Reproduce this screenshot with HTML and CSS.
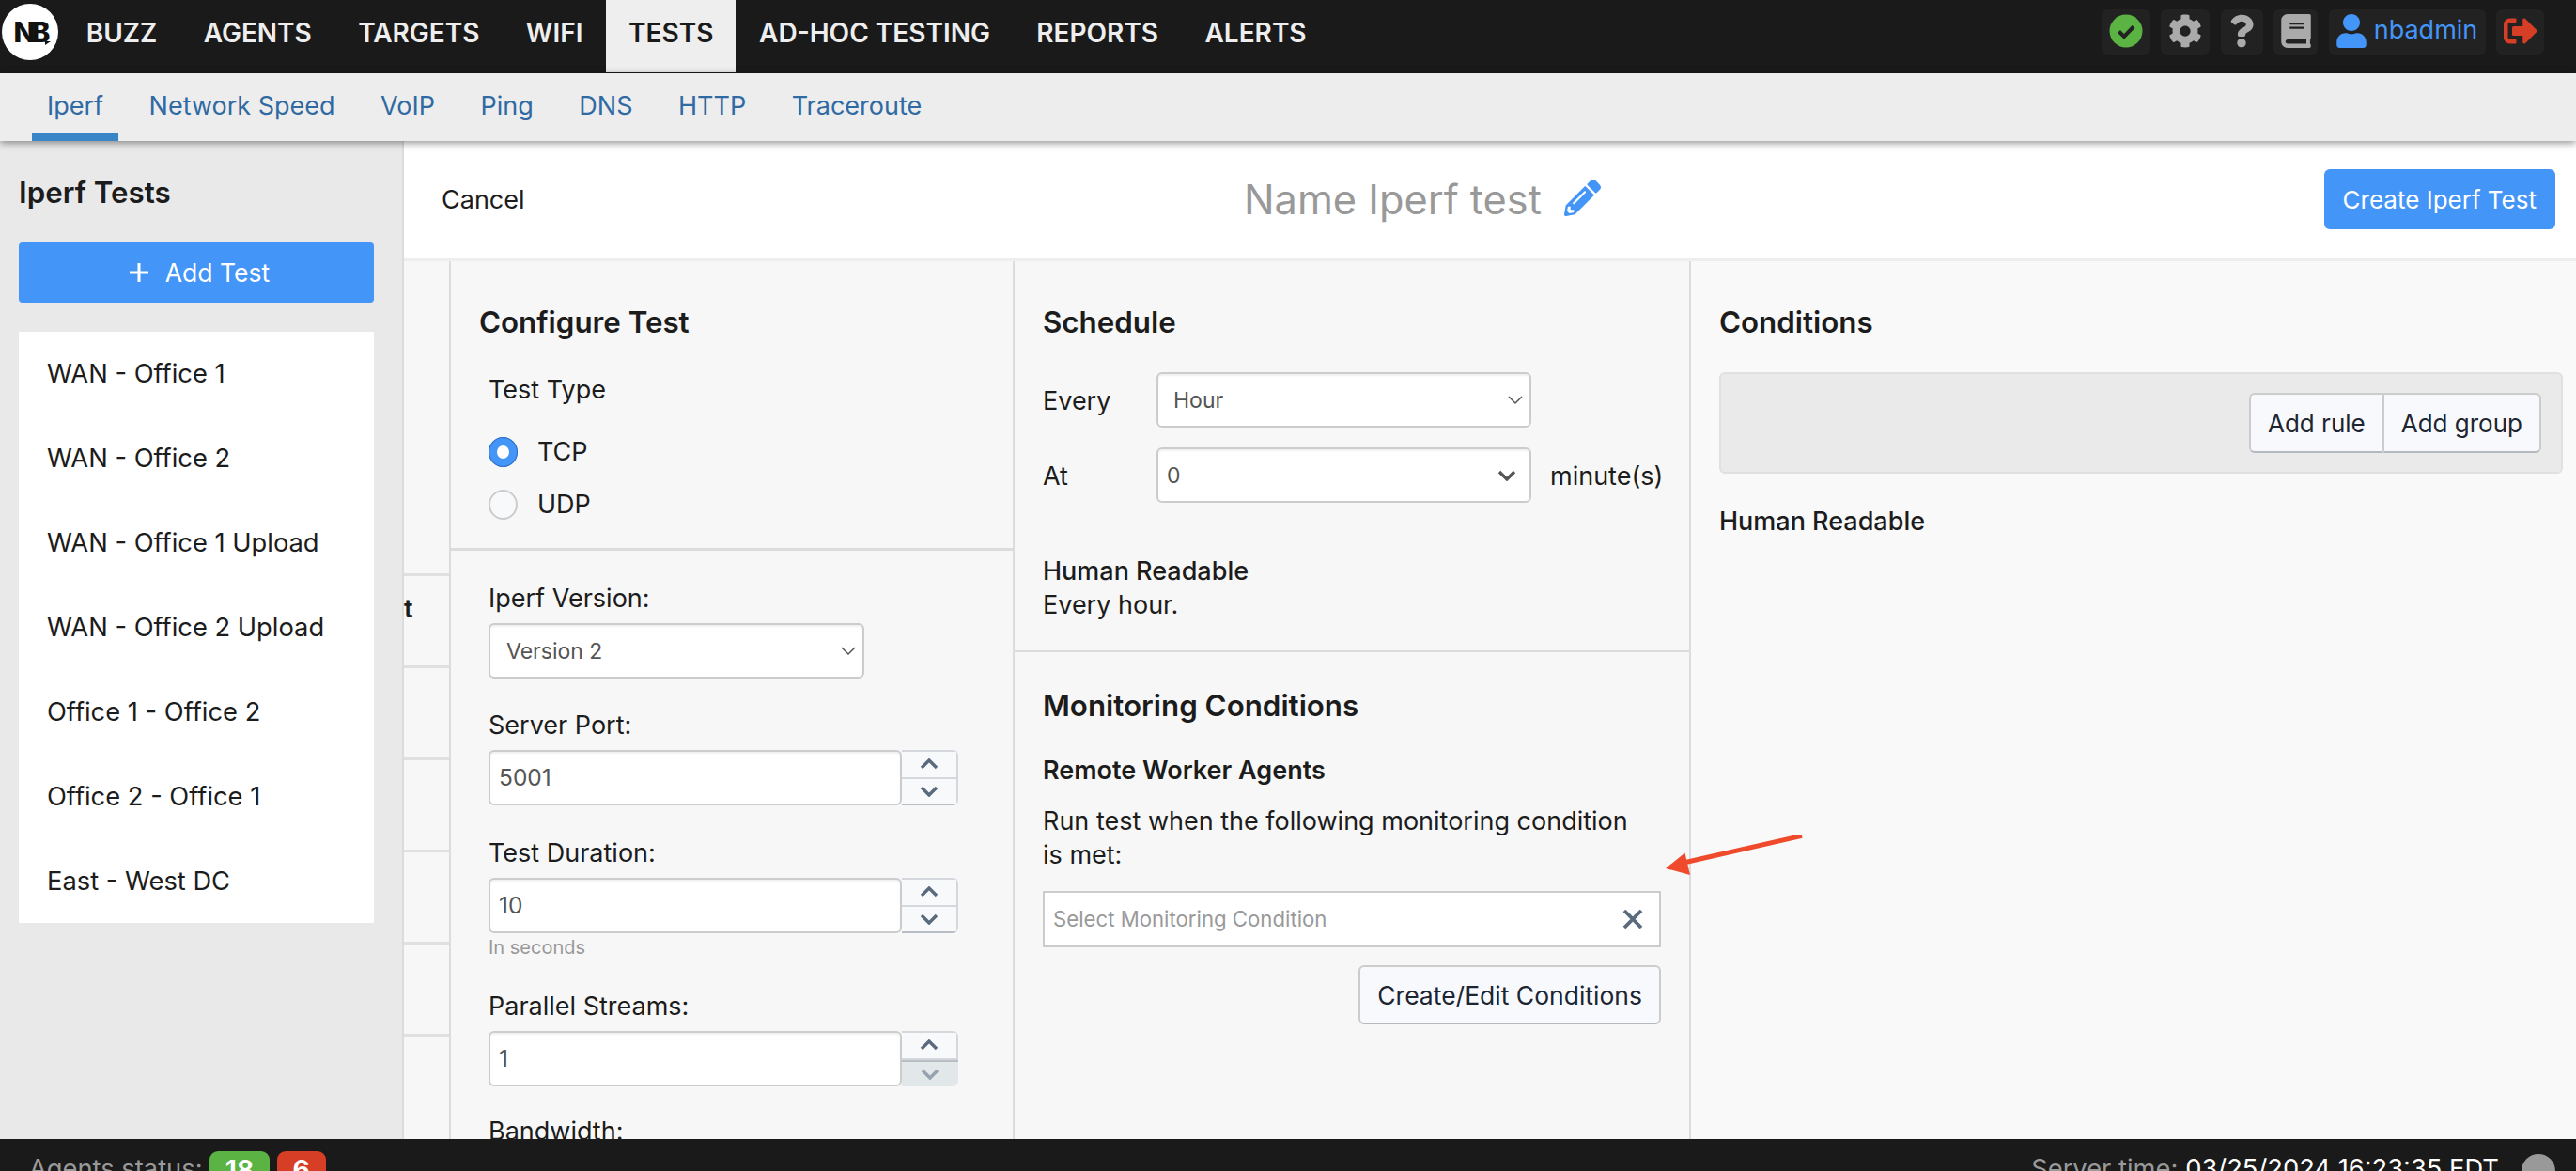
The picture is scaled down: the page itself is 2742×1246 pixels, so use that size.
FILE: index.html
```html
<!DOCTYPE html>
<html lang="en">

<head>
  <meta charset="UTF-8">
  <meta name="viewport" content="width=device-width, initial-scale=1.0">
  <title>Iperf Tests</title>
  <link rel="stylesheet" href="styles.css">
</head>

<body>
  <div class="app">
    <!-- top navigation -->
    <header class="topbar">
      <div class="logo"><span>NB</span></div>
      <nav class="mainnav">
        <a class="mainnav-item">BUZZ</a>
        <a class="mainnav-item">AGENTS</a>
        <a class="mainnav-item">TARGETS</a>
        <a class="mainnav-item">WIFI</a>
        <a class="mainnav-item active">TESTS</a>
        <a class="mainnav-item">AD-HOC TESTING</a>
        <a class="mainnav-item">REPORTS</a>
        <a class="mainnav-item">ALERTS</a>
      </nav>
      <div class="tools">
        <span class="chip chip-status">
          <svg class="icon-status" viewBox="0 0 36 36"><circle cx="18" cy="18" r="17.5" fill="#5ab343"/><path d="M10.5 18.5l5.5 5.5 10-10.5" fill="none" stroke="#222" stroke-width="4"/></svg>
        </span>
        <span class="chip chip-gear">
          <svg class="icon-gear" viewBox="0 0 512 512"><path fill="#aaa" d="M487.4 315.7l-42.6-24.6c4.3-23.2 4.3-47 0-70.2l42.6-24.6c4.9-2.8 7.1-8.6 5.5-14-11.1-35.6-30-67.8-54.7-94.6-3.8-4.1-10-5.1-14.8-2.3L380.8 110c-17.9-15.4-38.5-27.3-60.8-35.1V25.8c0-5.6-3.9-10.5-9.4-11.7-36.7-8.2-74.3-7.8-109.2 0-5.5 1.2-9.4 6.1-9.4 11.7V75c-22.2 7.9-42.8 19.8-60.8 35.1L88.7 85.5c-4.9-2.8-11-1.9-14.8 2.3-24.7 26.7-43.6 58.9-54.7 94.6-1.7 5.4.6 11.2 5.5 14L67.3 221c-4.3 23.2-4.3 47 0 70.2l-42.6 24.6c-4.9 2.8-7.1 8.6-5.5 14 11.1 35.6 30 67.8 54.7 94.6 3.8 4.1 10 5.1 14.8 2.3l42.6-24.6c17.9 15.4 38.5 27.3 60.8 35.1v49.2c0 5.6 3.9 10.5 9.4 11.7 36.7 8.2 74.3 7.8 109.2 0 5.5-1.2 9.4-6.1 9.4-11.7v-49.2c22.2-7.9 42.8-19.8 60.8-35.1l42.6 24.6c4.9 2.8 11 1.9 14.8-2.3 24.7-26.7 43.6-58.9 54.7-94.6 1.5-5.5-.7-11.3-5.6-14.1zM256 336c-44.1 0-80-35.9-80-80s35.9-80 80-80 80 35.9 80 80-35.9 80-80 80z"/></svg>
        </span>
        <span class="chip chip-help">
          <svg class="icon-help" viewBox="0 0 384 512"><path fill="#aaa" d="M202.021 0C122.202 0 70.503 32.703 29.914 91.026c-7.363 10.58-5.093 25.086 5.178 32.874l43.138 32.709c10.373 7.865 25.132 6.026 33.253-4.148 25.049-31.381 43.63-49.449 82.757-49.449 30.764 0 68.816 19.799 68.816 49.631 0 22.552-18.617 34.134-48.993 51.164-35.423 19.86-82.299 44.576-82.299 106.405V320c0 13.255 10.745 24 24 24h72.471c13.255 0 24-10.745 24-24v-5.773c0-42.86 125.268-44.645 125.268-160.627C377.504 66.256 286.902 0 202.021 0zM192 373.459c-38.196 0-69.271 31.075-69.271 69.271 0 38.195 31.075 69.27 69.271 69.27s69.271-31.075 69.271-69.271-31.075-69.27-69.271-69.27z"/></svg>
        </span>
        <span class="chip chip-book">
          <svg class="icon-book" viewBox="0 0 448 512"><path fill="#aaa" d="M448 360V24c0-13.3-10.7-24-24-24H96C43 0 0 43 0 96v320c0 53 43 96 96 96h328c13.3 0 24-10.7 24-24v-16c0-7.5-3.5-14.3-8.9-18.7-4.2-15.4-4.2-59.3 0-74.7 5.4-4.3 8.9-11.1 8.9-18.6zM128 134c0-3.3 2.7-6 6-6h212c3.3 0 6 2.7 6 6v20c0 3.3-2.7 6-6 6H134c-3.3 0-6-2.7-6-6v-20zm0 64c0-3.3 2.7-6 6-6h212c3.3 0 6 2.7 6 6v20c0 3.3-2.7 6-6 6H134c-3.3 0-6-2.7-6-6v-20zm253.4 250H96c-17.7 0-32-14.3-32-32 0-17.6 14.4-32 32-32h285.4c-1.9 17.1-1.9 46.9 0 64z"/></svg>
        </span>
        <span class="chip chip-user">
          <svg class="icon-user" viewBox="0 0 448 512"><path fill="#4495f8" d="M224 256c70.7 0 128-57.3 128-128S294.7 0 224 0 96 57.3 96 128s57.3 128 128 128zm89.6 32h-16.7c-22.2 10.2-46.9 16-72.9 16s-50.6-5.8-72.9-16h-16.7C60.2 288 0 348.2 0 422.4V464c0 26.5 21.5 48 48 48h352c26.5 0 48-21.5 48-48v-41.6c0-74.2-60.2-134.4-134.4-134.4z"/></svg>
          <span class="username">nbadmin</span>
        </span>
        <span class="chip chip-logout">
          <svg class="icon-logout" viewBox="0 0 512 512"><path fill="#d63e26" d="M497 273L329 441c-15 15-41 4.5-41-17v-96H152c-13.3 0-24-10.7-24-24v-96c0-13.3 10.7-24 24-24h136V88c0-21.4 25.9-32 41-17l168 168c9.3 9.4 9.3 24.6 0 34zM192 436v-40c0-6.6-5.4-12-12-12H96c-17.7 0-32-14.3-32-32V160c0-17.7 14.3-32 32-32h84c6.6 0 12-5.4 12-12V76c0-6.6-5.4-12-12-12H96c-53 0-96 43-96 96v192c0 53 43 96 96 96h84c6.6 0 12-5.4 12-12z"/></svg>
        </span>
      </div>
    </header>

    <nav class="subnav">
      <a class="subnav-item active">Iperf</a>
      <a class="subnav-item">Network Speed</a>
      <a class="subnav-item">VoIP</a>
      <a class="subnav-item">Ping</a>
      <a class="subnav-item">DNS</a>
      <a class="subnav-item">HTTP</a>
      <a class="subnav-item">Traceroute</a>
    </nav>

    <div class="workspace">
      <!-- list of tests -->
      <aside class="sidebar">
        <h2 class="sidebar-title">Iperf Tests</h2>
        <button class="add-test" type="button">
          <svg class="icon-plus" viewBox="0 0 22 22"><path d="M11 1v20M1 11h20" stroke="#fff" stroke-width="3"/></svg>
          Add Test
        </button>
        <ul class="test-list">
          <li>WAN - Office 1</li>
          <li>WAN - Office 2</li>
          <li>WAN - Office 1 Upload</li>
          <li>WAN - Office 2 Upload</li>
          <li>Office 1 - Office 2</li>
          <li>Office 2 - Office 1</li>
          <li>East - West DC</li>
        </ul>
      </aside>

      <main class="editor">
        <div class="editor-head">
          <a class="cancel">Cancel</a>
          <div class="test-name">
            <span>Name Iperf test</span>
            <svg class="icon-pencil" viewBox="0 0 512 512"><path fill="#4495f8" d="M497.9 142.1l-46.1 46.1c-4.7 4.7-12.3 4.7-17 0l-111-111c-4.7-4.7-4.7-12.3 0-17l46.1-46.1c18.7-18.7 49.1-18.7 67.9 0l60.1 60.1c18.8 18.7 18.8 49.1 0 67.9zM284.2 99.8L21.6 362.4.4 483.9c-2.9 16.4 11.4 30.6 27.8 27.8l121.5-21.3 262.6-262.6c4.7-4.7 4.7-12.3 0-17l-111-111c-4.8-4.7-12.4-4.7-17.1 0zM124.1 339.9c-5.5-5.5-5.5-14.3 0-19.8l154-154c5.5-5.5 14.3-5.5 19.8 0s5.5 14.3 0 19.8l-154 154c-5.5 5.5-14.3 5.5-19.8 0zM88 424h48v36.3l-64.5 11.3-31.1-31.1L51.7 376H88v48z"/></svg>
          </div>
          <button class="create-test" type="button">Create Iperf Test</button>
        </div>

        <div class="columns">
          <!-- table that is hidden behind the editor -->
          <div class="behind">
            <div class="behind-cell behind-first"></div>
            <div class="behind-cell">t</div>
            <div class="behind-cell"></div>
            <div class="behind-cell"></div>
            <div class="behind-cell"></div>
            <div class="behind-cell"></div>
          </div>

          <section class="col col-configure">
            <div class="block block-type">
              <h3 class="block-title">Configure Test</h3>
              <div class="test-type">Test Type</div>
              <label class="radio-row"><span class="radio checked"></span>TCP</label>
              <label class="radio-row"><span class="radio"></span>UDP</label>
            </div>
            <div class="block block-fields">
              <div class="field-label">Iperf Version:</div>
              <div class="select select-version">
                <span>Version 2</span>
                <svg class="chevron-thin" viewBox="0 0 16 10"><path d="M1 1l7 7 7-7" fill="none" stroke="#555" stroke-width="1.5"/></svg>
              </div>

              <div class="field-label">Server Port:</div>
              <div class="number">
                <div class="number-value">5001</div>
                <div class="stepper">
                  <span class="step"><svg class="chevron" viewBox="0 0 20 12"><path d="M2 10l8-8 8 8" fill="none" stroke="#5a6b7d" stroke-width="3.4"/></svg></span>
                  <span class="step"><svg class="chevron" viewBox="0 0 20 12"><path d="M2 2l8 8 8-8" fill="none" stroke="#5a6b7d" stroke-width="3.4"/></svg></span>
                </div>
              </div>

              <div class="field-label">Test Duration:</div>
              <div class="number">
                <div class="number-value">10</div>
                <div class="stepper">
                  <span class="step"><svg class="chevron" viewBox="0 0 20 12"><path d="M2 10l8-8 8 8" fill="none" stroke="#5a6b7d" stroke-width="3.4"/></svg></span>
                  <span class="step"><svg class="chevron" viewBox="0 0 20 12"><path d="M2 2l8 8 8-8" fill="none" stroke="#5a6b7d" stroke-width="3.4"/></svg></span>
                </div>
              </div>
              <div class="hint">In seconds</div>

              <div class="field-label">Parallel Streams:</div>
              <div class="number">
                <div class="number-value">1</div>
                <div class="stepper">
                  <span class="step"><svg class="chevron" viewBox="0 0 20 12"><path d="M2 10l8-8 8 8" fill="none" stroke="#5a6b7d" stroke-width="3.4"/></svg></span>
                  <span class="step step-disabled"><svg class="chevron" viewBox="0 0 20 12"><path d="M2 2l8 8 8-8" fill="none" stroke="#96a2ae" stroke-width="3.4"/></svg></span>
                </div>
              </div>

              <div class="field-label field-last">Bandwidth:</div>
            </div>
          </section>

          <section class="col col-schedule">
            <div class="block block-schedule">
              <h3 class="block-title">Schedule</h3>
              <div class="schedule-grid">
                <span>Every</span>
                <div class="select">
                  <span class="select-text-hour">Hour</span>
                  <svg class="chevron-thin" viewBox="0 0 16 10"><path d="M1 1l7 7 7-7" fill="none" stroke="#555" stroke-width="1.5"/></svg>
                </div>
                <span></span>
                <span>At</span>
                <div class="select select-minute">
                  <span>0</span>
                  <svg class="chevron-bold" viewBox="0 0 20 12"><path d="M2 2l8 8 8-8" fill="none" stroke="#555" stroke-width="3.4"/></svg>
                </div>
                <span>minute(s)</span>
              </div>
              <div class="readable">
                <div class="readable-title">Human Readable</div>
                <div>Every hour.</div>
              </div>
            </div>

            <div class="block block-monitoring">
              <h3 class="block-title">Monitoring Conditions</h3>
              <div class="agents-title">Remote Worker Agents</div>
              <p class="monitor-text">Run test when the following monitoring condition<br>is met:</p>
              <div class="monitor-select">
                <span>Select Monitoring Condition</span>
                <svg class="icon-clear" viewBox="0 0 22 20"><path d="M2 1l18 18M20 1L2 19" stroke="#5a6b7d" stroke-width="3.8"/></svg>
              </div>
              <div class="monitor-actions">
                <button class="plain-btn edit-btn" type="button">Create/Edit Conditions</button>
              </div>
            </div>
          </section>

          <section class="col col-conditions">
            <h3 class="block-title">Conditions</h3>
            <div class="rule-box">
              <div class="btn-group">
                <button class="plain-btn group-btn" type="button">Add rule</button>
                <button class="plain-btn group-btn" type="button">Add group</button>
              </div>
            </div>
            <div class="readable-title conditions-readable">Human Readable</div>
          </section>
        </div>
      </main>
    </div>

    <footer class="statusbar">
      <div class="status-left">
        <span class="muted">Agents status:</span>
        <span class="badge badge-green">18</span>
        <span class="badge badge-red">6</span>
      </div>
      <div class="status-right">
        <span class="muted">Server time:</span>
        <span class="server-time">03/25/2024 16:23:35 EDT</span>
        <span class="status-dot"></span>
      </div>
    </footer>

    <!-- annotation drawn on top of the screenshot -->
    <svg class="annotation" viewBox="0 0 150 44"><path d="M146 1.4L20 30" stroke="#ee4a2b" stroke-width="5" fill="none"/><path d="M1 36L21.5 19.5 27 43z" fill="#ee4a2b"/></svg>
  </div>
</body>

</html>
```

FILE: styles.css
```css
* {
  box-sizing: border-box;
}

html,
body {
  margin: 0;
  height: 100%;
}

body {
  font-family: Inter, "Liberation Sans", sans-serif;
  font-size: 27px;
  line-height: 34px;
  color: #1c1c1c;
  background-color: #f7f7f7;
}

button {
  font-family: inherit;
}

.app {
  position: relative;
  display: flex;
  flex-direction: column;
  height: 100vh;
  overflow: hidden;
}

/* top bar */
.topbar {
  display: flex;
  align-items: flex-start;
  height: 78px;
  flex: none;
  background-color: #1a1a1a;
}

.logo {
  position: relative;
  display: flex;
  align-items: center;
  justify-content: center;
  width: 60px;
  height: 60px;
  margin: 4px 0 0 2px;
  border-radius: 50%;
  background-color: #fff;
}

.logo span {
  font-size: 30px;
  font-weight: 800;
  letter-spacing: -4px;
  color: #111;
}

/* little tail under the B */
.logo::after {
  content: "";
  position: absolute;
  left: 46px;
  top: 40px;
  border-top: 4px solid #111;
  border-right: 6px solid transparent;
}

.mainnav {
  display: flex;
  margin-left: 5px;
}

.mainnav-item {
  height: 77px;
  padding: 0 24.7px;
  font-size: 28px;
  font-weight: 600;
  line-height: 70px;
  color: #eee;
}

.mainnav-item.active {
  padding: 0 24px;
  background-color: #eee;
  color: #1a1a1a;
}

.tools {
  display: flex;
  gap: 11.5px;
  margin: 10px 34px 0 auto;
}

.chip {
  display: flex;
  align-items: center;
  justify-content: center;
  height: 48px;
  border-radius: 6px;
  background-color: #222;
}

.chip-status,
.chip-gear {
  width: 52px;
}

.chip-logout {
  width: 51px;
}

.chip-help {
  width: 45px;
}

.chip-book {
  width: 47px;
}

.chip-user {
  width: 167px;
  gap: 8px;
}

.icon-status,
.icon-gear,
.icon-logout {
  width: 36px;
  height: 36px;
  margin-bottom: 2px;
}

.icon-help {
  width: 26px;
  height: 36px;
  margin-bottom: 2px;
}

.icon-book {
  width: 32px;
  height: 36px;
  margin-bottom: 2px;
}

.icon-user {
  width: 32px;
  height: 36px;
  margin-bottom: 2px;
}

.username {
  margin-bottom: 5px;
  font-size: 27px;
  line-height: 34px;
  color: #4495f8;
}

/* second level tabs */
.subnav {
  position: relative;
  z-index: 2;
  display: flex;
  flex: none;
  gap: 16.5px;
  height: 72px;
  padding-left: 34px;
  background-color: #ededed;
  box-shadow: 0 2px 8px rgba(0, 0, 0, 0.45);
}

.subnav-item {
  height: 72px;
  padding: 0 16px;
  font-size: 27px;
  line-height: 70px;
  color: #2f6aa3;
}

.subnav-item.active {
  border-bottom: 8px solid #3a85c8;
}

/* page body */
.workspace {
  display: flex;
  flex: 1;
  min-height: 0;
}

.sidebar {
  flex: none;
  width: 430px;
  padding: 37px 30px 0 20px;
  border-right: 2px solid #dcdcdc;
  background-color: #e9e9e9;
}

.sidebar-title {
  margin: 0 0 35px;
  font-size: 31.3px;
  font-weight: 600;
  line-height: 36px;
}

.add-test {
  display: flex;
  align-items: center;
  justify-content: center;
  gap: 17px;
  width: 378px;
  height: 64px;
  padding-left: 12px;
  border: 0;
  border-radius: 4px;
  background-color: #4495f8;
  color: #fff;
  font-size: 26.5px;
}

.icon-plus {
  width: 22px;
  height: 22px;
}

.test-list {
  display: grid;
  grid-auto-rows: 90px;
  align-items: center;
  width: 378px;
  height: 629px;
  margin: 31px 0 0;
  padding: 0 0 0 30px;
  list-style: none;
  background-color: #fff;
  font-size: 27.3px;
}

.editor {
  display: flex;
  flex-direction: column;
  flex: 1;
  min-width: 0;
}

.editor-head {
  position: relative;
  display: flex;
  flex: none;
  align-items: center;
  justify-content: space-between;
  height: 128px;
  padding: 0 22px 0 40px;
  border-bottom: 4px solid #eee;
  background-color: #fff;
}

.cancel {
  padding-top: 2px;
  font-size: 27px;
}

.test-name {
  position: absolute;
  left: 894px;
  top: 32px;
  display: flex;
  align-items: center;
  gap: 24px;
  font-size: 43.3px;
  line-height: 60px;
  color: #999;
}

.icon-pencil {
  width: 39px;
  height: 39px;
  margin-top: -4px;
}

.create-test {
  height: 64px;
  padding: 0 20px;
  border: 0;
  border-radius: 6px;
  background-color: #4495f8;
  color: #fff;
  font-size: 26px;
}

.columns {
  display: flex;
  flex: 1;
  min-height: 0;
}

.behind {
  flex: none;
  width: 50px;
  border-right: 2px solid #dcdcdc;
  font-weight: 600;
}

.behind-cell {
  height: 98px;
  border-bottom: 3px solid #e0e0e0;
  line-height: 70px;
}

.behind-first {
  height: 335px;
}

.col {
  flex: none;
  background-color: #f7f7f7;
}

.col-configure {
  width: 600px;
  border-right: 2px solid #dcdcdc;
}

.col-schedule {
  width: 720px;
  border-right: 2px solid #dcdcdc;
}

.col-conditions {
  flex: 1;
  padding: 47px 14px 0 30px;
  background-color: #f9f9f9;
}

.block-title {
  margin: 0;
  font-size: 31.3px;
  font-weight: 600;
  line-height: 36px;
}

.block-type {
  height: 308px;
  padding: 47px 0 0 30px;
  border-bottom: 3px solid #dcdcdc;
}

.test-type {
  margin: 37px 0 32px 10px;
}

.radio-row {
  display: flex;
  align-items: center;
  gap: 21px;
  margin: 0 0 22px 10px;
}

.radio {
  width: 31px;
  height: 32px;
  border: 2px solid #ccc;
  border-radius: 50%;
  background-color: #f8f9fb;
}

.radio.checked {
  border: 9px solid #4495f8;
  outline: 1px solid #2f6fc0;
  outline-offset: -1px;
  background-color: #fff;
}

.block-fields {
  padding: 32px 0 0 40px;
}

.field-label {
  padding-top: 2px;
  margin-bottom: 9px;
}

.select {
  display: flex;
  align-items: center;
  justify-content: space-between;
  height: 59px;
  padding: 1px 7px 0 17px;
  border: 2px solid #ccc;
  border-radius: 6px;
  background-color: #fff;
  box-shadow: inset 0 2px 2px rgba(0, 0, 0, 0.06);
  font-size: 23px;
  color: #555;
}

.select-version {
  width: 400px;
  margin-bottom: 31px;
}

.select-text-hour {
  margin-left: -1px;
}

.select-minute {
  padding: 1px 14px 0 9px;
}

.chevron-thin {
  width: 16px;
  height: 10px;
}

.chevron-bold {
  width: 20px;
  height: 12px;
}

.number {
  display: flex;
  width: 500px;
  height: 59px;
}

.number + .field-label {
  margin-top: 32px;
}

.number + .field-last {
  margin-top: 29px;
}

.number-value {
  flex: 1;
  padding-left: 9px;
  border: 2px solid #ccc;
  border-radius: 6px;
  background-color: #fff;
  box-shadow: inset 0 2px 2px rgba(0, 0, 0, 0.06);
  font-size: 24.5px;
  line-height: 55px;
  color: #555;
}

.stepper {
  display: flex;
  flex-direction: column;
  width: 60px;
  overflow: hidden;
  border-radius: 0 6px 6px 0;
}

.step {
  display: flex;
  flex: 1;
  align-items: center;
  justify-content: center;
  border: 2px solid #d4d8dc;
  border-left: 0;
  background-color: #f8f9fb;
}

.step + .step {
  border-top: 0;
  border-bottom-color: #b8bec4;
}

.step-disabled {
  border: 0;
  background-color: #e2e7ea;
}

.step + .step-disabled {
  border: 0;
  border-top: 2px solid #b8bec4;
}

.chevron {
  width: 20px;
  height: 12px;
}

.hint {
  height: 25px;
  margin-top: 2px;
  font-size: 20px;
  line-height: 26px;
  color: #999;
}

.hint + .field-label {
  margin-top: 32px;
}

.block-schedule {
  height: 416px;
  padding: 47px 0 0 30px;
  border-bottom: 2px solid #dcdcdc;
}

.schedule-grid {
  display: grid;
  grid-template-columns: 121px 399px auto;
  row-gap: 21px;
  align-items: center;
  margin-top: 35px;
}

.schedule-grid > span {
  padding-top: 2px;
}

.schedule-grid > span:last-child {
  margin-left: 20px;
}

.readable {
  margin-top: 55px;
  line-height: 36px;
}

.readable-title {
  font-weight: 500;
}

.block-monitoring {
  padding: 39px 30px 0 30px;
}

.agents-title {
  margin-top: 34px;
  font-weight: 600;
}

.monitor-text {
  margin: 19px 0 20px;
  line-height: 36px;
}

.monitor-select {
  display: flex;
  align-items: center;
  justify-content: space-between;
  height: 60px;
  padding: 0 17px 0 9px;
  border: 2px solid #ccc;
  background-color: #fff;
  font-size: 22.2px;
  color: #999;
}

.icon-clear {
  width: 22px;
  height: 20px;
}

.monitor-actions {
  display: flex;
  justify-content: flex-end;
  margin-top: 19px;
}

.plain-btn {
  padding: 0 18px;
  border: 2px solid #ccc;
  border-bottom-color: #b4b9bf;
  border-radius: 6px;
  background-color: #f8f9fc;
  color: #1c2530;
  font-size: 26px;
}

.edit-btn {
  height: 63px;
  font-size: 26.5px;
}

.rule-box {
  display: flex;
  justify-content: flex-end;
  height: 108px;
  margin-top: 35px;
  padding: 20px 21px 0 0;
  border: 2px solid #e0e0e0;
  border-radius: 6px;
  background-color: #eaeaea;
}

.btn-group {
  display: flex;
  height: 64px;
}

.group-btn {
  height: 64px;
}

.group-btn:first-child {
  border-radius: 6px 0 0 6px;
  border-right: 1px solid #ccc;
}

.group-btn:last-child {
  border-left: 1px solid #ccc;
  border-radius: 0 6px 6px 0;
}

.conditions-readable {
  margin-top: 34px;
}

/* footer, only its upper part fits in the window */
.statusbar {
  display: flex;
  flex: none;
  justify-content: space-between;
  height: 34px;
  overflow: hidden;
  padding: 13px 22px 0 31px;
  background-color: #1a1a1a;
  font-size: 27.3px;
  line-height: 38px;
}

.status-left,
.status-right {
  display: flex;
  align-items: flex-start;
}

.status-left {
  gap: 7.5px;
}

.muted {
  color: #999;
}

.badge {
  height: 40px;
  border-radius: 9px;
  color: #fff;
  font-size: 28px;
  font-weight: 700;
  line-height: 40px;
  text-align: center;
}

.badge-green {
  width: 64px;
  background-color: #5ab343;
}

.badge-red {
  width: 52px;
  background-color: #d63e26;
}

.server-time {
  margin-left: 8px;
  color: #fff;
}

.status-dot {
  width: 36px;
  height: 36px;
  margin: 3px 0 0 24px;
  border-radius: 50%;
  background-color: #999;
}

.annotation {
  position: absolute;
  left: 1772px;
  top: 888px;
  width: 150px;
  height: 44px;
}
```
